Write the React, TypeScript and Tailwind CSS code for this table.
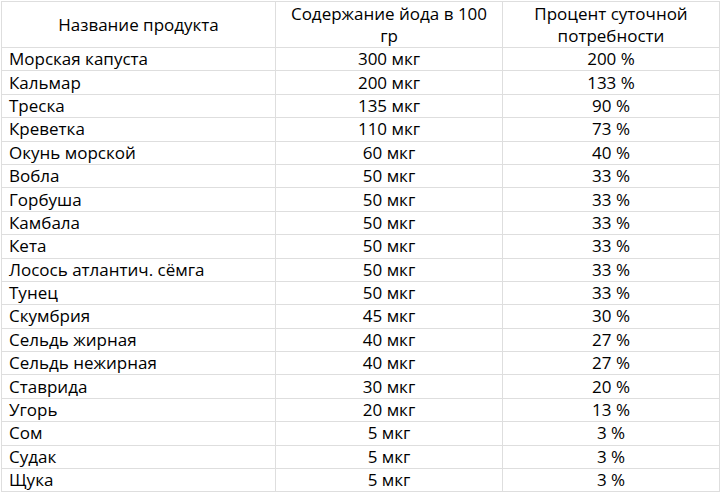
const rows: [string, string, string][] = [
  ['Морская капуста', '300 мкг', '200 %'],
  ['Кальмар', '200 мкг', '133 %'],
  ['Треска', '135 мкг', '90 %'],
  ['Креветка', '110 мкг', '73 %'],
  ['Окунь морской', '60 мкг', '40 %'],
  ['Вобла', '50 мкг', '33 %'],
  ['Горбуша', '50 мкг', '33 %'],
  ['Камбала', '50 мкг', '33 %'],
  ['Кета', '50 мкг', '33 %'],
  ['Лосось атлантич. сёмга', '50 мкг', '33 %'],
  ['Тунец', '50 мкг', '33 %'],
  ['Скумбрия', '45 мкг', '30 %'],
  ['Сельдь жирная', '40 мкг', '27 %'],
  ['Сельдь нежирная', '40 мкг', '27 %'],
  ['Ставрида', '30 мкг', '20 %'],
  ['Угорь', '20 мкг', '13 %'],
  ['Сом', '5 мкг', '3 %'],
  ['Судак', '5 мкг', '3 %'],
  ['Щука', '5 мкг', '3 %'],
];

export default function App() {
  return (
    <div className="w-[720px] h-[492px] bg-white p-px font-['Open_Sans',sans-serif] text-[17px] leading-[20px] text-[#000]">
      <table className="w-[718px] border-collapse table-fixed">
        <colgroup>
          <col className="w-[274px]" />
          <col className="w-[227px]" />
          <col className="w-[217px]" />
        </colgroup>
        <thead>
          <tr className="h-[46px] leading-[22px]">
            <th className="border border-[#dedede] font-normal text-center px-3">Название продукта</th>
            <th className="border border-[#dedede] font-normal text-center px-3">Содержание йода в 100 гр</th>
            <th className="border border-[#dedede] font-normal text-center px-3">Процент суточной потребности</th>
          </tr>
        </thead>
        <tbody>
          {rows.map(([name, amount, pct]) => (
            <tr key={name} className="h-[23.4px]">
              <td className="border border-[#dedede] pl-[7px] py-0">{name}</td>
              <td className="border border-[#dedede] text-center py-0">{amount}</td>
              <td className="border border-[#dedede] text-center py-0">{pct}</td>
            </tr>
          ))}
        </tbody>
      </table>
    </div>
  );
}
